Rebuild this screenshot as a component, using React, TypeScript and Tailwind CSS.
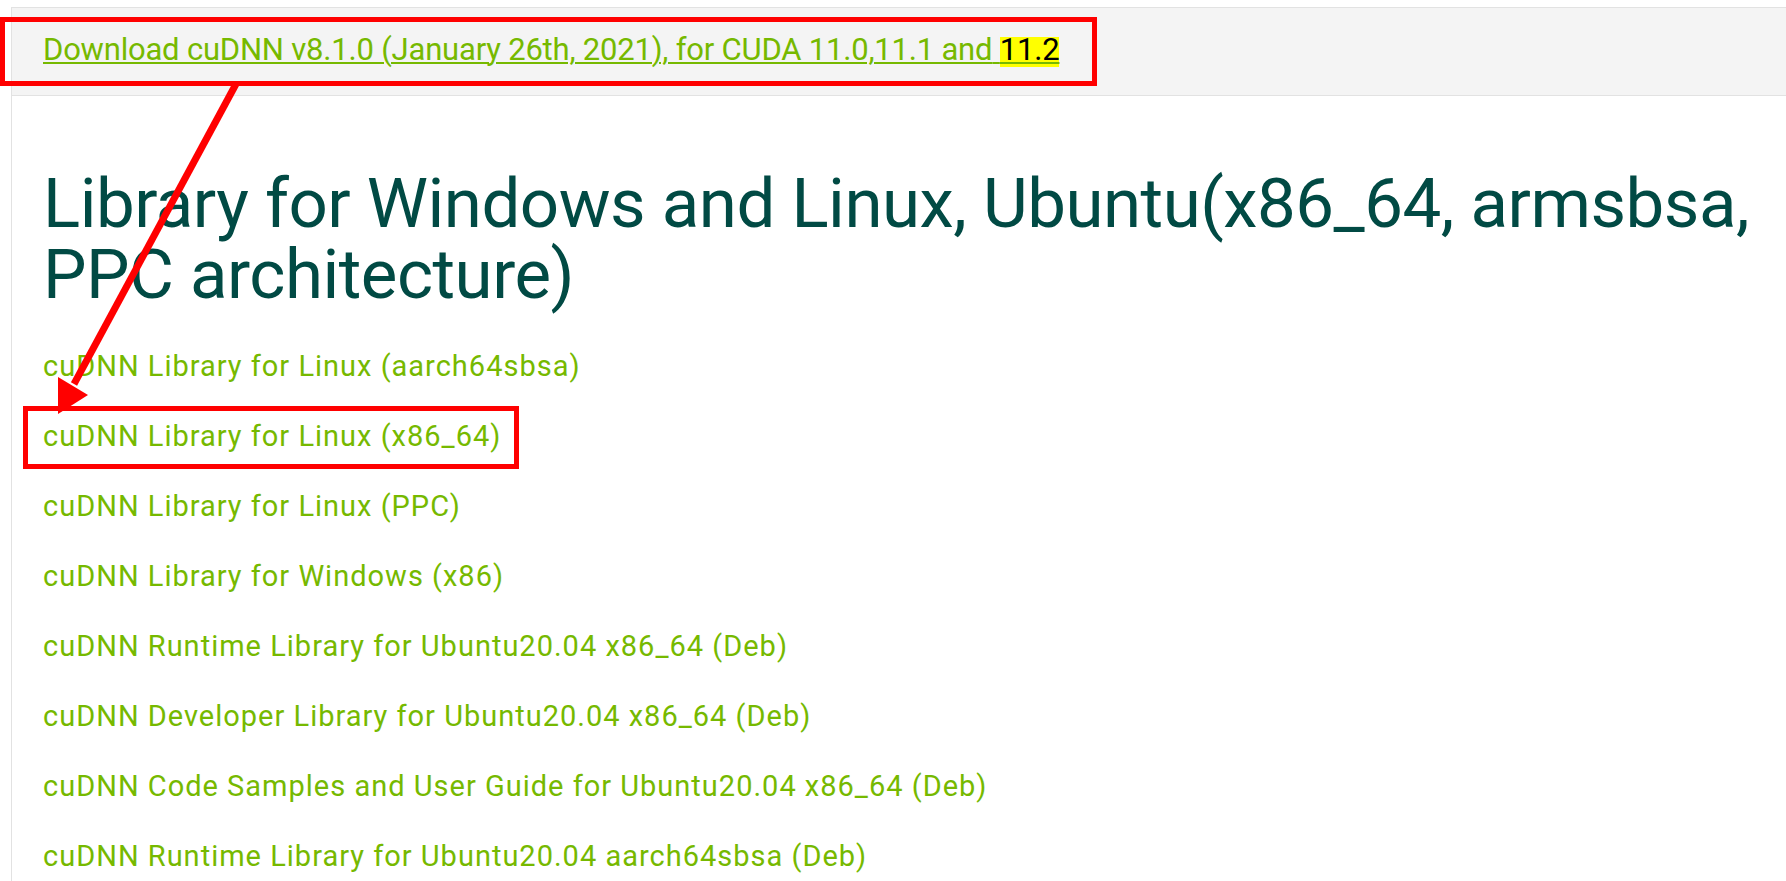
import React from "react";

const links = [
  "cuDNN Library for Linux (aarch64sbsa)",
  "cuDNN Library for Linux (x86_64)",
  "cuDNN Library for Linux (PPC)",
  "cuDNN Library for Windows (x86)",
  "cuDNN Runtime Library for Ubuntu20.04 x86_64 (Deb)",
  "cuDNN Developer Library for Ubuntu20.04 x86_64 (Deb)",
  "cuDNN Code Samples and User Guide for Ubuntu20.04 x86_64 (Deb)",
  "cuDNN Runtime Library for Ubuntu20.04 aarch64sbsa (Deb)",
];

export default function App() {
  return (
    <div className="relative min-h-screen overflow-hidden bg-white pt-[7px] font-[Roboto,'Noto_Sans',sans-serif]">
      <div className="ml-[11px] min-h-[874px] border-l border-[#e2e2e2]">
        <div className="border-y border-[#e2e2e2] bg-[#f4f4f4] pb-[25px] pl-[31px] pt-[22px]">
          <a
            href="#"
            className="whitespace-nowrap text-[31px] leading-[40px] tracking-[-0.2px] text-[#76b900] underline decoration-[#76b900] decoration-2 underline-offset-[2px]"
          >
            Download cuDNN v8.1.0 (January 26th, 2021), for CUDA 11.0,11.1 and{" "}
            <span className="inline-block bg-[#ffff00] pb-[5px] leading-[25px] text-black underline decoration-[#76b900] decoration-2 underline-offset-[2px]">
              11.2
            </span>
          </a>
        </div>

        <h1 className="mt-[72px] whitespace-nowrap pl-[31px] text-[69px] font-normal leading-[71px] tracking-[-0.5px] text-[#014a44]">
          Library for Windows and Linux, Ubuntu(x86_64, armsbsa,
          <br />
          PPC architecture)
        </h1>

        <div className="mt-[21px] flex flex-col pl-[31px]">
          {links.map((l) => (
            <a
              key={l}
              href="#"
              className="block whitespace-nowrap text-[29px] leading-[70px] tracking-[1px] text-[#76b900]"
            >
              {l}
            </a>
          ))}
        </div>
      </div>

      {/* annotation: red box around header link */}
      <div className="pointer-events-none absolute left-0 top-[17px] h-[69px] w-[1097px] border-[5px] border-[#ff0000]" />
      {/* annotation: red box around x86_64 link */}
      <div className="pointer-events-none absolute left-[23px] top-[406px] h-[63px] w-[496px] border-[5px] border-[#ff0000]" />
      {/* annotation: arrow */}
      <svg
        className="pointer-events-none absolute left-0 top-0"
        width="1786"
        height="881"
        viewBox="0 0 1786 881"
      >
        <line x1="236" y1="84" x2="74" y2="384" stroke="#ff0000" strokeWidth="7" />
        <polygon points="58,414 88,395 58,377" fill="#ff0000" />
      </svg>
    </div>
  );
}
